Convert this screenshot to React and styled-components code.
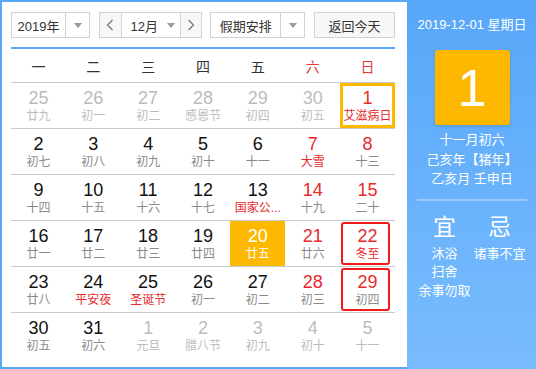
import React from 'react';
import styled, { createGlobalStyle } from 'styled-components';

const Global = createGlobalStyle`
  html, body {
    margin: 0;
    padding: 0;
    background: #fff;
  }
  body {
    font-family: "Liberation Sans", "Noto Sans CJK SC", sans-serif;
  }
`;

const Wrapper = styled.div`
  display: flex;
  width: 536px;
  height: 369px;
`;

const Main = styled.div`
  box-sizing: border-box;
  width: 407px;
  height: 369px;
  border: 2px solid #5aa8f8;
  border-right: none;
  padding: 10px 12px 0 9px;
  background: #fff;
`;

const Toolbar = styled.div`
  display: flex;
  justify-content: space-between;
  height: 26px;
  padding-bottom: 9px;
  border-bottom: 2px solid #5aa8f8;
`;

const Select = styled.div`
  box-sizing: border-box;
  display: flex;
  width: ${p => p.w}px;
  height: 26px;
  border: 1px solid #d2d2d2;
  background: #fff;
  font-size: 13px;
  color: #333;
`;

const SelectText = styled.div`
  flex: 1;
  display: flex;
  align-items: center;
  justify-content: center;
`;

const ArrowBox = styled.div`
  width: 23px;
  border-left: 1px solid #d2d2d2;
  display: flex;
  align-items: center;
  justify-content: center;
`;

const Caret = styled.span`
  width: 0;
  height: 0;
  border-left: 4px solid transparent;
  border-right: 4px solid transparent;
  border-top: 5px solid #999;
  margin-left: ${p => p.ml || 0}px;
`;

const StepBtn = styled.div`
  width: ${p => p.w}px;
  background: #f7f7f7;
  display: flex;
  align-items: center;
  justify-content: center;
  ${p => (p.left ? 'border-right: 1px solid #d2d2d2;' : 'border-left: 1px solid #d2d2d2;')}
`;

const MonthText = styled.div`
  flex: 1;
  display: flex;
  align-items: center;
  justify-content: center;
  padding-left: 4px;
`;

const TodayBtn = styled.div`
  box-sizing: border-box;
  width: 81px;
  height: 26px;
  border: 1px solid #d2d2d2;
  background: #f7f7f7;
  font-size: 13px;
  color: #333;
  display: flex;
  align-items: center;
  justify-content: center;
`;

const Grid = styled.div`
  display: grid;
  grid-template-columns: repeat(7, 1fr);
`;

const HeadRow = styled(Grid)`
  height: 33px;
  border-bottom: 1px solid #cacaca;
`;

const HeadCell = styled.div`
  display: flex;
  align-items: center;
  justify-content: center;
  font-size: 14px;
  color: ${p => (p.weekend ? '#e03a3a' : '#333')};
`;

const WeekRow = styled(Grid)`
  height: 45px;
  border-bottom: ${p => (p.last ? 'none' : '1px solid #cacaca')};
`;

const Cell = styled.div`
  position: relative;
  display: flex;
  flex-direction: column;
  align-items: center;
  padding-top: 4px;
  box-sizing: border-box;
  background: ${p => (p.selected ? '#ffb800' : 'transparent')};
  box-shadow: ${p => (p.today ? 'inset 0 0 0 3px #ffb800' : 'none')};
  ${p =>
    p.marked &&
    `
    &::after {
      content: '';
      position: absolute;
      top: 1px;
      bottom: 1px;
      left: 1px;
      right: 5px;
      border: 2px solid #f21b1b;
      border-radius: 3px;
    }
  `}
`;

const DayNum = styled.div`
  font-size: 18px;
  line-height: 22px;
  color: ${p => p.color};
`;

const Lunar = styled.div`
  font-size: 12px;
  line-height: 14px;
  white-space: nowrap;
  color: ${p => p.color};
`;

const Side = styled.div`
  flex: 1;
  height: 369px;
  box-sizing: border-box;
  padding: 15px 9px 0 10px;
  background: linear-gradient(#57a7f9, #79bcfd);
  color: #fff;
  display: flex;
  flex-direction: column;
  align-items: center;
`;

const SideDate = styled.div`
  font-size: 13px;
  line-height: 20px;
  white-space: nowrap;
`;

const BigDay = styled.div`
  width: 75px;
  height: 75px;
  margin-top: 15px;
  border-radius: 3px;
  background: #ffb800;
  box-shadow: 0 1px 3px rgba(0, 0, 0, 0.15);
  display: flex;
  align-items: center;
  justify-content: center;
  font-size: 52px;
  color: #fff;
`;

const LunarInfo = styled.div`
  margin-top: 5px;
  font-size: 13px;
  line-height: 19.5px;
  text-align: center;
  white-space: nowrap;
`;

const Divider = styled.div`
  align-self: stretch;
  height: 2px;
  margin-top: 10px;
  background: rgba(255, 255, 255, 0.32);
`;

const Columns = styled.div`
  align-self: stretch;
  display: grid;
  grid-template-columns: 1fr 1fr;
  margin-top: 12px;
`;

const Col = styled.div`
  display: flex;
  flex-direction: column;
  align-items: center;
`;

const ColHead = styled.div`
  font-size: 23px;
  line-height: 28px;
  margin-bottom: 4px;
`;

const ColItem = styled.div`
  font-size: 13px;
  line-height: 18.5px;
  white-space: nowrap;
`;

const Chevron = ({ dir }) => (
  <svg width="8" height="12" viewBox="0 0 8 12">
    <polyline
      points={dir === 'left' ? '6.5,1 1.5,6 6.5,11' : '1.5,1 6.5,6 1.5,11'}
      fill="none"
      stroke="#777"
      strokeWidth="1.2"
    />
  </svg>
);

const weekdays = ['一', '二', '三', '四', '五', '六', '日'];

// [day, lunar, other month, red lunar text]
const weeks = [
  [[25, '廿九', 1], [26, '初一', 1], [27, '初二', 1], [28, '感恩节', 1], [29, '初四', 1], [30, '初五', 1], [1, '艾滋病日', 0, 1]],
  [[2, '初七'], [3, '初八'], [4, '初九'], [5, '初十'], [6, '十一'], [7, '大雪', 0, 1], [8, '十三']],
  [[9, '十四'], [10, '十五'], [11, '十六'], [12, '十七'], [13, '国家公...', 0, 1], [14, '十九'], [15, '二十']],
  [[16, '廿一'], [17, '廿二'], [18, '廿三'], [19, '廿四'], [20, '廿五'], [21, '廿六'], [22, '冬至', 0, 1]],
  [[23, '廿八'], [24, '平安夜', 0, 1], [25, '圣诞节', 0, 1], [26, '初一'], [27, '初二'], [28, '初三'], [29, '初四']],
  [[30, '初五'], [31, '初六'], [1, '元旦', 1], [2, '腊八节', 1], [3, '初九', 1], [4, '初十', 1], [5, '十一', 1]],
];

const RED = '#e8292c';

const App = () => (
  <Wrapper>
    <Global />
    <Main>
      <Toolbar>
        <Select w={79}>
          <SelectText>2019年</SelectText>
          <ArrowBox>
            <Caret />
          </ArrowBox>
        </Select>
        <Select w={103}>
          <StepBtn w={21} left>
            <Chevron dir="left" />
          </StepBtn>
          <MonthText>
            12月
            <Caret ml={9} />
          </MonthText>
          <StepBtn w={20}>
            <Chevron dir="right" />
          </StepBtn>
        </Select>
        <Select w={95}>
          <SelectText>假期安排</SelectText>
          <ArrowBox>
            <Caret />
          </ArrowBox>
        </Select>
        <TodayBtn>返回今天</TodayBtn>
      </Toolbar>

      <HeadRow>
        {weekdays.map((d, i) => (
          <HeadCell key={d} weekend={i >= 5}>
            {d}
          </HeadCell>
        ))}
      </HeadRow>

      {weeks.map((week, wi) => (
        <WeekRow key={wi} last={wi === weeks.length - 1}>
          {week.map(([day, lunar, other, festival], di) => {
            const selected = wi === 3 && di === 4;
            const today = wi === 0 && di === 6;
            const marked = (wi === 3 || wi === 4) && di === 6;
            let numColor = '#111';
            let lunarColor = '#8a8a8a';
            if (other) {
              numColor = '#bcbcbc';
              lunarColor = '#bcbcbc';
            } else {
              if (di >= 5) numColor = RED;
              if (festival) lunarColor = RED;
            }
            if (selected) {
              numColor = '#fff';
              lunarColor = '#fff';
            }
            return (
              <Cell key={di} selected={selected} today={today} marked={marked}>
                <DayNum color={numColor}>{day}</DayNum>
                <Lunar color={lunarColor}>{lunar}</Lunar>
              </Cell>
            );
          })}
        </WeekRow>
      ))}
    </Main>

    <Side>
      <SideDate>2019-12-01 星期日</SideDate>
      <BigDay>1</BigDay>
      <LunarInfo>
        十一月初六
        <br />
        己亥年【猪年】
        <br />
        乙亥月 壬申日
      </LunarInfo>
      <Divider />
      <Columns>
        <Col>
          <ColHead>宜</ColHead>
          <ColItem>沐浴</ColItem>
          <ColItem>扫舍</ColItem>
          <ColItem>余事勿取</ColItem>
        </Col>
        <Col>
          <ColHead>忌</ColHead>
          <ColItem>诸事不宜</ColItem>
        </Col>
      </Columns>
    </Side>
  </Wrapper>
);

export default App;
